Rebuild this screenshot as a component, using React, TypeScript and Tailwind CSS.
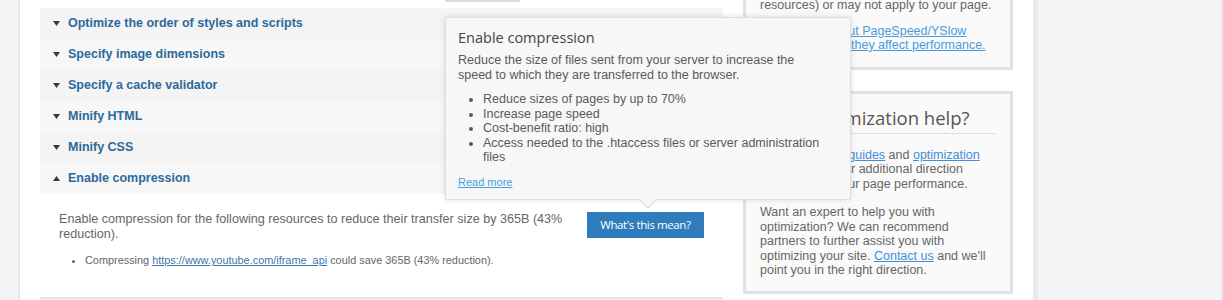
import React from "react";

const rules = [
  "Optimize the order of styles and scripts",
  "Specify image dimensions",
  "Specify a cache validator",
  "Minify HTML",
  "Minify CSS",
];

const tips = [
  "Reduce sizes of pages by up to 70%",
  "Increase page speed",
  "Cost-benefit ratio: high",
  "Access needed to the .htaccess files or server administration files",
];

function Caret({ up = false }: { up?: boolean }) {
  return (
    <svg width="7" height="5" viewBox="0 0 7 5" className="shrink-0">
      {up ? (
        <polygon points="0,5 7,5 3.5,0" fill="#3a3a3a" />
      ) : (
        <polygon points="0,0 7,0 3.5,5" fill="#3a3a3a" />
      )}
    </svg>
  );
}

function RuleRow({ title, index, open = false }: { title: string; index: number; open?: boolean }) {
  return (
    <div
      className={`flex items-center h-[31px] pl-[13px] gap-[8px] ${
        index % 2 === 0 ? "bg-[#f4f4f4]" : "bg-[#f7f7f7]"
      }`}
    >
      <Caret up={open} />
      <span className="text-[12.5px] font-bold text-[#2d6a9b]">{title}</span>
    </div>
  );
}

function Tooltip() {
  return (
    <div className="absolute left-[405px] top-[17px] w-[406px] h-[183px] bg-[#f7f7f7] border border-[#dedede] shadow-[0_0_6px_rgba(0,0,0,0.12)] px-[12px] pt-[8px] z-10">
      <h3 className="font-['Open_Sans',sans-serif] text-[14.5px] text-[#444] leading-[24px]">
        Enable compression
      </h3>
      <p className="mt-[3px] w-[348px] text-[12.5px] leading-[15px] text-[#5a5a5a]">
        Reduce the size of files sent from your server to increase the speed to which they are
        transferred to the browser.
      </p>
      <ul className="mt-[9px] pl-[25px] list-disc text-[12.5px] leading-[14.5px] text-[#5a5a5a]">
        {tips.map((t) => (
          <li key={t}>{t}</li>
        ))}
      </ul>
      <a href="#" className="block mt-[9px] text-[11px] text-[#4a9fdc] underline">
        Read more
      </a>
      <div className="absolute left-[196px] bottom-[-7px] w-[12px] h-[12px] rotate-45 bg-[#f7f7f7] border-r border-b border-[#dedede]" />
    </div>
  );
}

export default function App() {
  return (
    <div className="h-[300px] overflow-hidden flex bg-[#f3f3f3] font-['Liberation_Sans',Arial,sans-serif]">
      <div className="w-[18px] shrink-0" />
      <div className="w-[1015px] shrink-0 bg-white border-l-[2px] border-[#e7e7e7] flex pl-[20px] pr-[20px] gap-[20px]">
        {/* main column */}
        <div className="relative w-[683px] shrink-0">
          <div className="ml-[405px] w-[75px] h-[2px] bg-[#dcdcdc]" />
          <div className="mt-[6px]">
            {rules.map((r, i) => (
              <RuleRow key={r} title={r} index={i} />
            ))}
            <RuleRow title="Enable compression" index={5} open />
          </div>
          <div className="h-[103px] px-[19px] pt-[18px]">
            <div className="flex items-start gap-[21px]">
              <p className="w-[510px] text-[12.6px] leading-[15px] text-[#666]">
                Enable compression for the following resources to reduce their transfer size by
                365B (43% reduction).
              </p>
              <button className="w-[118px] h-[26px] bg-[#2f7cbd] text-white font-['Open_Sans',sans-serif] text-[11.5px] tracking-[-0.4px]">
                What&apos;s this mean?
              </button>
            </div>
            <ul className="mt-[12px] pl-[26px] list-disc text-[10.9px] leading-[13px] text-[#666]">
              <li>
                Compressing{" "}
                <a href="#" className="text-[#3b76a8] underline">
                  https://www.youtube.com/iframe_api
                </a>{" "}
                could save 365B (43% reduction).
              </li>
            </ul>
          </div>
          <div className="h-[31px] bg-[#f0f0f0] border-t-[2px] border-[#e6e6e6]" />
          <Tooltip />
        </div>

        {/* sidebar */}
        <div className="w-[270px] shrink-0 text-[12.5px] leading-[14.5px] text-[#666]">
          <div className="-mt-[2px] bg-[#fafafa] border-[3px] border-t-0 border-[#e2e2e2] px-[14px] pb-[14px]">
            <p>resources) or may not apply to your page.</p>
            <p className="mt-[11px]">
              <a href="#" className="text-[#4a9bdc] underline">
                Learn more about PageSpeed/YSlow
                <br />
                scores and how they affect performance.
              </a>
            </p>
          </div>
          <div className="mt-[21px] bg-[#fafafa] border-[3px] border-[#e2e2e2] px-[14px] pt-[12px] pb-[13px]">
            <h3 className="font-['Open_Sans',sans-serif] text-[18.5px] leading-[24px] text-[#555] pb-[3px] border-b border-[#dedede]">
              Need optimization help?
            </h3>
            <p className="mt-[14px] whitespace-nowrap">
              Read our{" "}
              <a href="#" className="text-[#3d8fd6] underline">
                video guides
              </a>{" "}
              and{" "}
              <a href="#" className="text-[#3d8fd6] underline">
                optimization
                <br />
                video tutorials
              </a>{" "}
              for additional direction
              <br />
              on improving your page performance.
            </p>
            <p className="mt-[14px]">
              Want an expert to help you with optimization? We can recommend partners to further
              assist you with optimizing your site.{" "}
              <a href="#" className="text-[#3d8fd6] underline">
                Contact us
              </a>{" "}
              and we&apos;ll point you in the right direction.
            </p>
          </div>
        </div>
      </div>
      <div className="w-[190px] shrink-0 bg-[#f4f4f4] border-l-[5px] border-r-[2px] border-[#e9e9e9]" />
    </div>
  );
}
